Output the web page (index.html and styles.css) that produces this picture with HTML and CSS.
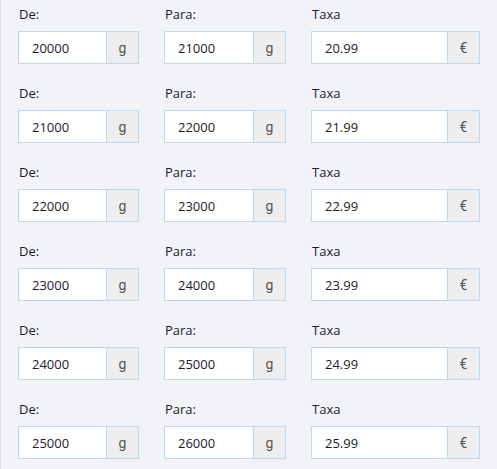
FILE: index.html
```html
<!DOCTYPE html>
<html lang="pt">
<head>
  <meta charset="UTF-8" />
  <title>Taxas por peso</title>
  <link rel="stylesheet" href="styles.css">
</head>
<body>
  <div class="rates">
    <div class="rate-row">
      <div class="field col-from"><label>De:</label><div class="input-group"><input type="text" value="20000"><span class="addon">g</span></div></div>
      <div class="field col-to"><label>Para:</label><div class="input-group"><input type="text" value="21000"><span class="addon">g</span></div></div>
      <div class="field col-fee"><label>Taxa</label><div class="input-group"><input type="text" value="20.99"><span class="addon">€</span></div></div>
    </div>
    <div class="rate-row">
      <div class="field col-from"><label>De:</label><div class="input-group"><input type="text" value="21000"><span class="addon">g</span></div></div>
      <div class="field col-to"><label>Para:</label><div class="input-group"><input type="text" value="22000"><span class="addon">g</span></div></div>
      <div class="field col-fee"><label>Taxa</label><div class="input-group"><input type="text" value="21.99"><span class="addon">€</span></div></div>
    </div>
    <div class="rate-row">
      <div class="field col-from"><label>De:</label><div class="input-group"><input type="text" value="22000"><span class="addon">g</span></div></div>
      <div class="field col-to"><label>Para:</label><div class="input-group"><input type="text" value="23000"><span class="addon">g</span></div></div>
      <div class="field col-fee"><label>Taxa</label><div class="input-group"><input type="text" value="22.99"><span class="addon">€</span></div></div>
    </div>
    <div class="rate-row">
      <div class="field col-from"><label>De:</label><div class="input-group"><input type="text" value="23000"><span class="addon">g</span></div></div>
      <div class="field col-to"><label>Para:</label><div class="input-group"><input type="text" value="24000"><span class="addon">g</span></div></div>
      <div class="field col-fee"><label>Taxa</label><div class="input-group"><input type="text" value="23.99"><span class="addon">€</span></div></div>
    </div>
    <div class="rate-row">
      <div class="field col-from"><label>De:</label><div class="input-group"><input type="text" value="24000"><span class="addon">g</span></div></div>
      <div class="field col-to"><label>Para:</label><div class="input-group"><input type="text" value="25000"><span class="addon">g</span></div></div>
      <div class="field col-fee"><label>Taxa</label><div class="input-group"><input type="text" value="24.99"><span class="addon">€</span></div></div>
    </div>
    <div class="rate-row">
      <div class="field col-from"><label>De:</label><div class="input-group"><input type="text" value="25000"><span class="addon">g</span></div></div>
      <div class="field col-to"><label>Para:</label><div class="input-group"><input type="text" value="26000"><span class="addon">g</span></div></div>
      <div class="field col-fee"><label>Taxa</label><div class="input-group"><input type="text" value="25.99"><span class="addon">€</span></div></div>
    </div>
  </div>
</body>
</html>
```

FILE: styles.css
```css
html,
body {
  margin: 0;
  height: 100%;
}

body {
  font-family: "Open Sans", "Noto Sans", sans-serif;
  font-size: 13px;
  color: #1b1b2b;
  background: #f2f3f7;
  border-left: 1px solid #e2e3e8;
  box-sizing: border-box;
}

.rates {
  padding: 5px 0 0 17px;
}

.rate-row {
  display: flex;
  gap: 25px;
  margin-bottom: 20px;
}

.field label {
  display: block;
  line-height: 18px;
  margin: 0 0 8px 1px;
}

.input-group {
  display: flex;
  height: 33px;
}

.input-group input {
  flex: 1;
  min-width: 0;
  box-sizing: border-box;
  height: 33px;
  margin: 0;
  padding: 0 12px 0 13px;
  font-family: inherit;
  font-size: 13px;
  color: #1b1b2b;
  background: #fff;
  border: 1px solid #b7dbf7;
  border-right: none;
  border-radius: 0;
  outline: none;
}

.addon {
  display: flex;
  align-items: center;
  justify-content: center;
  box-sizing: border-box;
  width: 33px;
  height: 33px;
  padding-top: 1px;
  background: #eeeeee;
  border: 1px solid #b7dbf7;
  color: #555;
  font-family: Roboto, "Open Sans", sans-serif;
  font-size: 14px;
}

.col-from .input-group {
  width: 121px;
}

.col-to .input-group {
  width: 122px;
}

.col-fee .input-group {
  width: 169px;
}
```
